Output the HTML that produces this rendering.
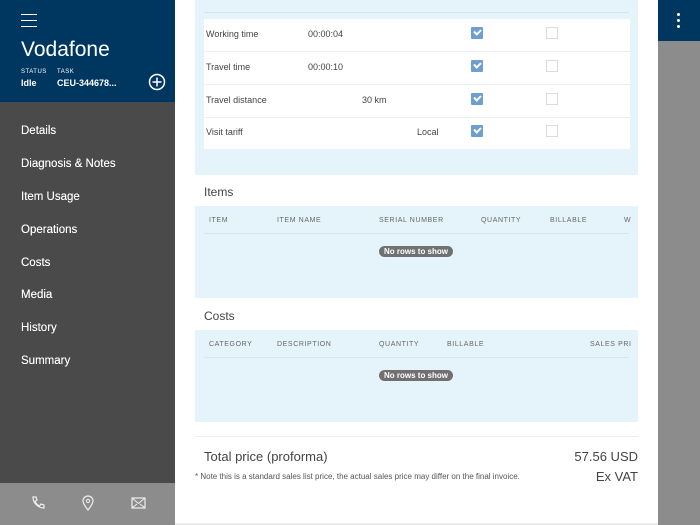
<!DOCTYPE html><html><head><style>
*{margin:0;padding:0;box-sizing:border-box}
body{width:700px;height:525px;overflow:hidden;background:#e9ecee;font-family:"Liberation Sans",sans-serif;position:relative}
.abs{position:absolute}
.side{left:0;top:0;width:175px;height:525px;background:#4a4a4a}
.hdr{left:0;top:0;width:175px;height:102px;background:#003760;color:#fff}
.menu div{position:absolute;left:21px;color:#fff;font-size:11.5px;text-shadow:0 0 .3px #fff}
.foot{left:0;top:483px;width:175px;height:42px;background:#8c8c8c}
.main{left:175px;top:0;width:483px;height:523px;background:#fff}
.panel{background:#e5f4fa;position:absolute;left:20px;width:443px}
.th{position:absolute;font-size:7px;color:#666;letter-spacing:.6px}
.td{position:absolute;font-size:9px;color:#444}
.cb{position:absolute;width:12px;height:12px;background:#6f9fd0;border-radius:1px}
.cb:after{content:"";position:absolute;left:3px;top:2px;width:5px;height:3px;border-left:2px solid #fff;border-bottom:2px solid #fff;transform:rotate(-45deg)}
.ce{position:absolute;width:12px;height:12px;border:1px solid #ddd;background:#fff}
.pill{position:absolute;left:205px;background:#707070;color:#fff;font-size:8px;font-weight:bold;padding:1px 5px;border-radius:6px}
.h{position:absolute;left:29px;font-size:12px;color:#444}
</style></head><body>
<div class="abs side"></div>
<div class="abs hdr">
 <div class="abs" style="left:21px;top:14px;width:16px;height:1.2px;background:#fff;box-shadow:0 6px 0 #fff,0 12px 0 #fff"></div>
 <div class="abs" style="left:21px;top:38px;font-size:21px">Vodafone</div>
 <div class="abs" style="left:21px;top:69px;font-size:6px;letter-spacing:.5px">STATUS</div>
 <div class="abs" style="left:57px;top:69px;font-size:6px;letter-spacing:.5px">TASK</div>
 <div class="abs" style="left:21px;top:78px;font-size:9px;font-weight:bold">Idle</div>
 <div class="abs" style="left:57px;top:78px;font-size:9px;font-weight:bold">CEU-344678...</div>
 <svg class="abs" style="left:148px;top:73px" width="18" height="18"><circle cx="9" cy="9" r="7.5" fill="none" stroke="#fff" stroke-width="1.5"/><path d="M9 4.5v9M4.5 9h9" stroke="#fff" stroke-width="1.5"/></svg>
</div>
<div class="menu">
<div style="top:125px">Details</div><div style="top:158px">Diagnosis &amp; Notes</div><div style="top:191px">Item Usage</div><div style="top:224px">Operations</div><div style="top:257px">Costs</div><div style="top:289px">Media</div><div style="top:322px">History</div><div style="top:355px">Summary</div>
</div>
<div class="abs foot">
<svg class="abs" style="left:30px;top:12px" width="16" height="16"><path d="M3 2l3 0 1 3-2 1.5c1 2 2.5 3.5 4.5 4.5L11 9l3 1v3c-6 0-11-5-11-11z" fill="none" stroke="#eee" stroke-width="1.2"/></svg>
<svg class="abs" style="left:81px;top:12px" width="14" height="16"><path d="M7 15C3 10 2 8 2 6a5 5 0 0110 0c0 2-1 4-5 9z" fill="none" stroke="#eee" stroke-width="1.2"/><circle cx="7" cy="6" r="1.6" fill="none" stroke="#eee"/></svg>
<svg class="abs" style="left:131px;top:14px" width="15" height="12"><rect x="1" y="1" width="13" height="10" fill="none" stroke="#eee" stroke-width="1.2"/><path d="M1 1l6.5 5.5L14 1M1 11l5-4M14 11l-5-4" fill="none" stroke="#eee"/></svg>
</div>
<div class="abs main">
 <div class="panel" style="top:0;height:175px">
  <div style="position:absolute;left:9px;top:12px;width:425px;height:1px;background:#d5e5ec"></div>
  <div class="th" style="left:14px;top:-5px">TYPE</div><div class="th" style="left:116px;top:-5px">HOURS</div><div class="th" style="left:170px;top:-5px">DISTANCE</div><div class="th" style="left:225px;top:-5px">VISIT</div><div class="th" style="left:280px;top:-5px">BILLABLE</div><div class="th" style="left:355px;top:-5px">WARRANTY</div><div class="th" style="left:423px;top:-5px">SA</div>
  <div style="position:absolute;left:9px;top:19px;width:426px;height:130px;background:#fff">
   <div style="position:absolute;left:0;top:32px;width:100%;height:1px;background:#eee;box-shadow:0 33px 0 #eee,0 66px 0 #eee"></div>
   <div class="td" style="left:2px;top:10px">Working time</div><div class="td" style="left:104px;top:10px">00:00:04</div>
   <div class="td" style="left:2px;top:43px">Travel time</div><div class="td" style="left:104px;top:43px">00:00:10</div>
   <div class="td" style="left:2px;top:76px">Travel distance</div><div class="td" style="left:158px;top:76px">30 km</div>
   <div class="td" style="left:2px;top:108px">Visit tariff</div><div class="td" style="left:213px;top:108px">Local</div>
   <div class="cb" style="left:267px;top:8px"></div><div class="cb" style="left:267px;top:41px"></div><div class="cb" style="left:267px;top:74px"></div><div class="cb" style="left:267px;top:106px"></div>
   <div class="ce" style="left:342px;top:8px"></div><div class="ce" style="left:342px;top:41px"></div><div class="ce" style="left:342px;top:74px"></div><div class="ce" style="left:342px;top:106px"></div>
  </div>
 </div>
 <div class="h" style="top:185px">Items</div>
 <div class="panel" style="top:206px;height:92px">
  <div style="position:absolute;left:9px;top:27px;width:425px;height:1px;background:#d5e5ec"></div>
  <div class="th" style="left:14px;top:11px">ITEM</div><div class="th" style="left:82px;top:11px">ITEM NAME</div><div class="th" style="left:184px;top:11px">SERIAL NUMBER</div><div class="th" style="left:286px;top:11px">QUANTITY</div><div class="th" style="left:355px;top:11px">BILLABLE</div><div class="th" style="left:429px;top:11px">W</div>
  <div class="pill" style="left:184px;top:40px">No rows to show</div>
 </div>
 <div class="h" style="top:309px">Costs</div>
 <div class="panel" style="top:330px;height:92px">
  <div style="position:absolute;left:9px;top:27px;width:425px;height:1px;background:#d5e5ec"></div>
  <div class="th" style="left:14px;top:11px">CATEGORY</div><div class="th" style="left:82px;top:11px">DESCRIPTION</div><div class="th" style="left:184px;top:11px">QUANTITY</div><div class="th" style="left:252px;top:11px">BILLABLE</div><div class="th" style="left:395px;top:11px">SALES PRI</div>
  <div class="pill" style="left:184px;top:40px">No rows to show</div>
 </div>
 <div style="position:absolute;left:20px;top:436px;width:443px;height:1px;background:#eee"></div>
 <div class="abs" style="left:29px;top:449px;font-size:13px;color:#444">Total price (proforma)</div>
 <div class="abs" style="right:20px;top:449px;font-size:13px;color:#444">57.56 USD</div>
 <div class="abs" style="left:20px;top:472px;font-size:8px;color:#555">* Note this is a standard sales list price, the actual sales price may differ on the final invoice.</div>
 <div class="abs" style="right:20px;top:469px;font-size:13px;color:#444">Ex VAT</div>
</div>
<div class="abs" style="left:658px;top:0;width:42px;height:525px;background:#8c8c8c"></div>
<div class="abs" style="left:658px;top:0;width:42px;height:41px;background:#003760">
 <div class="abs" style="left:19px;top:13px;width:3px;height:3px;border-radius:50%;background:#fff;box-shadow:0 6px 0 #fff,0 12px 0 #fff"></div>
</div>
</body></html>
